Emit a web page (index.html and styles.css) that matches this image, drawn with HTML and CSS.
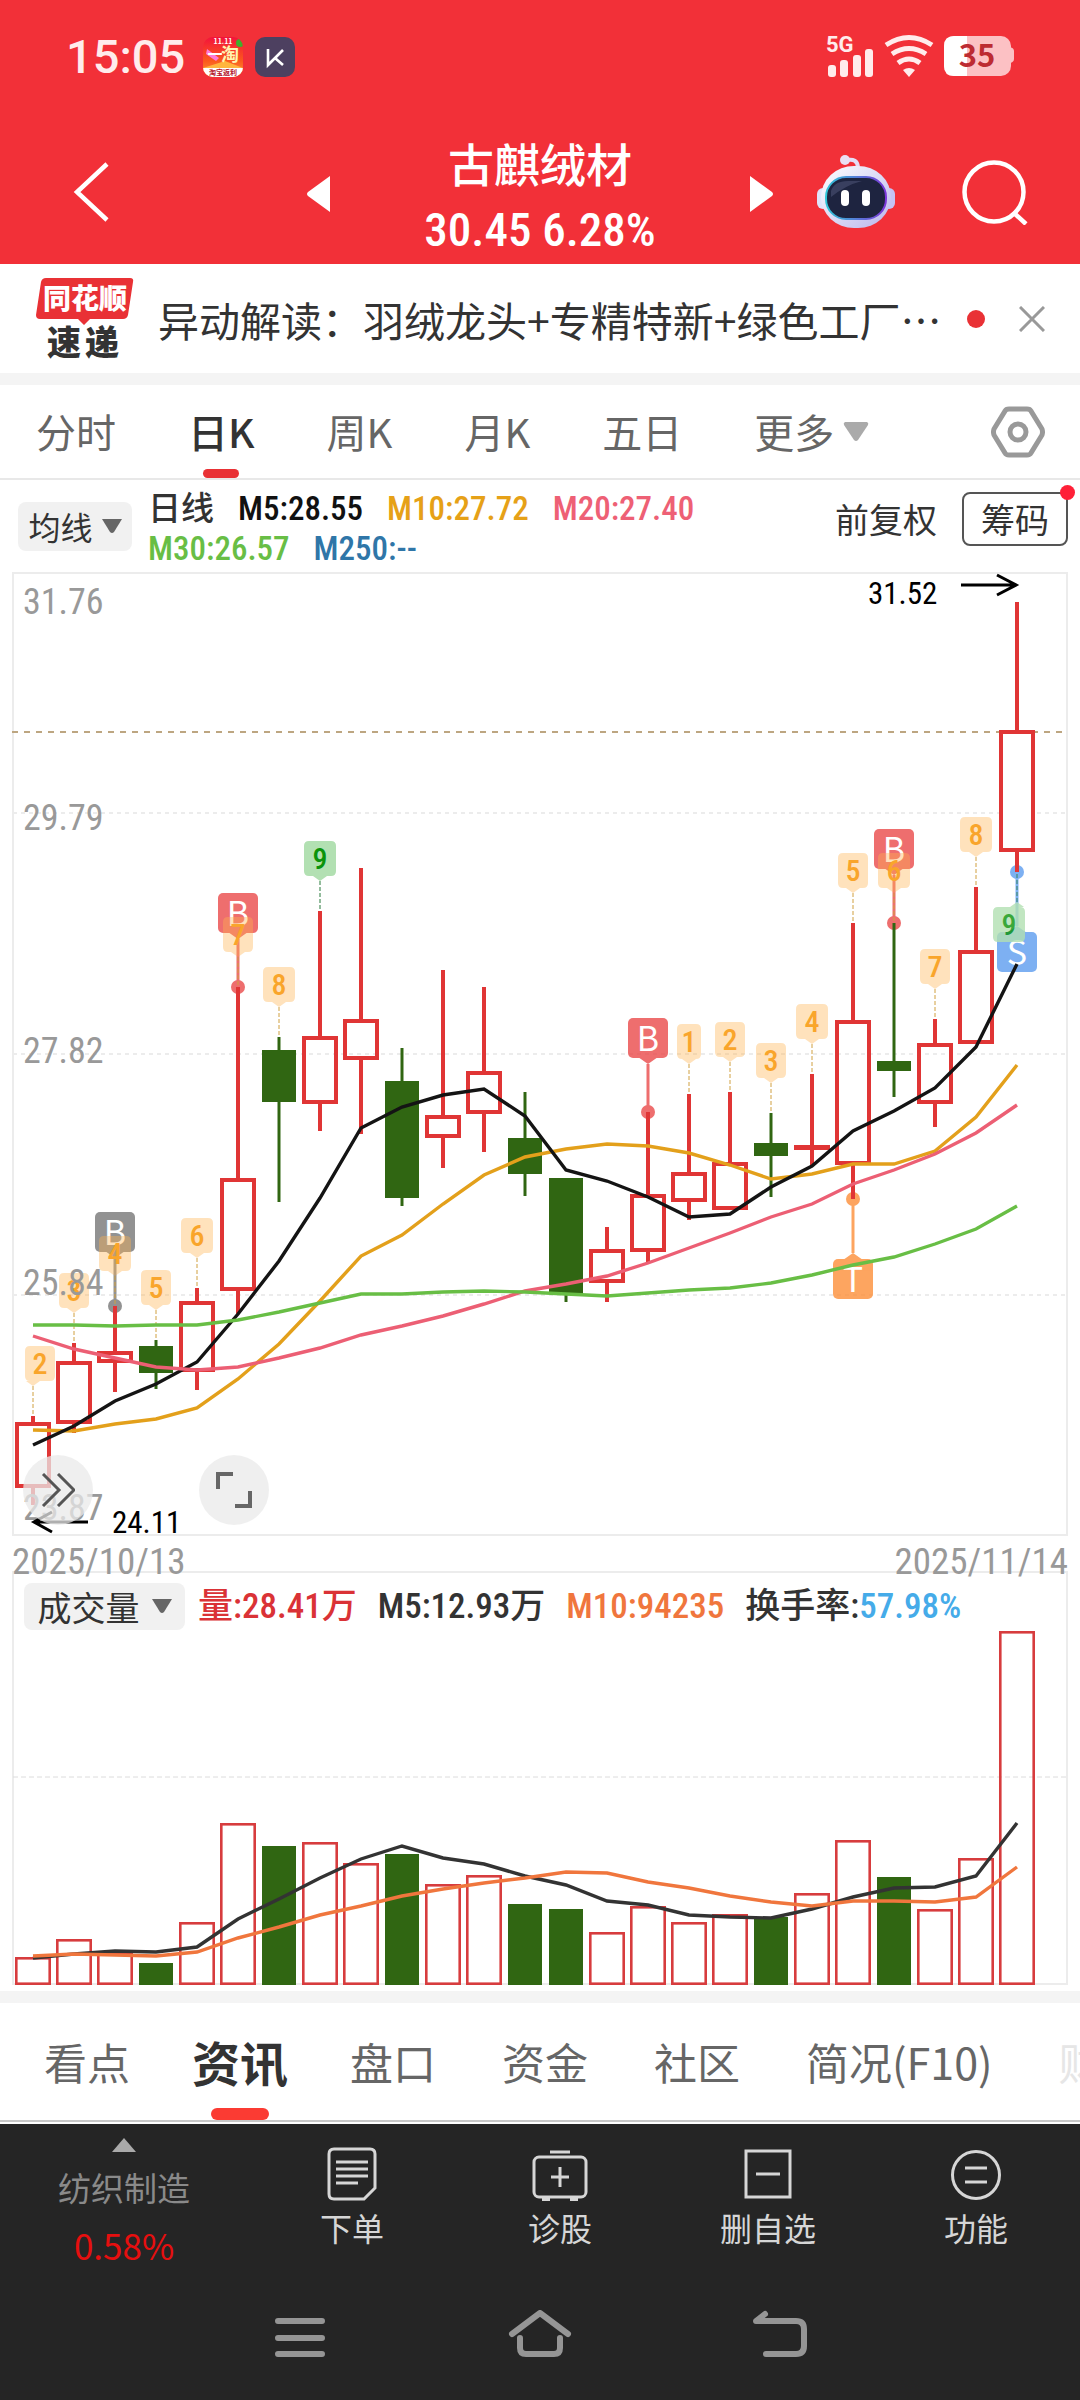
FILE: index.html
```html
<!DOCTYPE html>
<html lang="zh-CN">
<head>
<meta charset="utf-8">
<meta name="viewport" content="width=device-width, initial-scale=1">
<title>古麒绒材 30.45</title>
<link rel="stylesheet" href="styles.css">
</head>
<body>
<header class="top">
  <div class="status">
    <span class="clock">15:05</span>
    <svg class="app-icon" viewBox="0 0 40 40" aria-hidden="true">
      <defs><linearGradient id="app" x1="0" y1="0" x2="0" y2="1"><stop offset="0" stop-color="#f3123c"/><stop offset=".6" stop-color="#fb5a1c"/><stop offset="1" stop-color="#ff9a3a"/></linearGradient><clipPath id="appclip"><rect width="40" height="40" rx="10"/></clipPath></defs>
      <g clip-path="url(#appclip)"><rect width="40" height="40" fill="url(#app)"/><path d="M4 12l12 9-3 3-10-7z" fill="#ff7ad8"/><circle cx="37" cy="6" r="4" fill="#3faf2c"/><path d="M0 31L22 24L40 31V40H0z" fill="#ffb53e"/><rect y="31" width="40" height="9" fill="#fff"/>
      <text x="20" y="7" font-size="7" class="mini" fill="#fff">11.11</text><text x="12" y="23" font-size="15" class="mini" fill="#fff">一</text><text x="27" y="24" font-size="18" class="mini" fill="#fff3b0">淘</text><text x="20" y="38" font-size="7" class="mini" fill="#b3122a">淘宝返利</text></g>
    </svg>
    <svg class="app-icon" viewBox="0 0 40 40" aria-hidden="true"><rect width="40" height="40" rx="10" fill="#4d4060"/><path d="M13 12V28L28 13M20 21L28 28" fill="none" stroke="#fff" stroke-width="2.6"/></svg>
    <svg class="signals" viewBox="0 0 190 44" role="img" aria-label="5G 35%">
      <text x="0" y="17" class="net" fill="#ffecec">5G</text>
      <g fill="#ffecec"><rect x="2" y="30" width="8" height="12" rx="3"/><rect x="14" y="25" width="8" height="17" rx="3"/><rect x="27" y="20" width="8" height="22" rx="3"/><rect x="39" y="14" width="8" height="28" rx="3"/><path d="M83 42L77 35Q83 31 89 35Z"/></g>
      <g fill="none" stroke="#ffecec" stroke-width="5"><path d="M60 10Q83 -5 106 10"/><path d="M66 19Q83 8 100 19"/><path d="M72 28Q83 20 94 28"/></g>
      <path d="M184 12q4 1 4 4v8q0 3-4 4z" fill="#fcc1c4"/><rect x="118" y="1" width="67" height="40" rx="10" fill="#fcc1c4"/><path d="M128 1H141V41H128Q118 41 118 31V11Q118 1 128 1Z" fill="#fff"/>
      <text x="151" y="32" class="battery" fill="#bd2b32">35</text>
    </svg>
  </div>
  <div class="titlebar">
    <button class="icon-btn" aria-label="返回"><svg width="40" height="66" viewBox="0 0 40 66"><path d="M35 5L5 33L35 61" fill="none" stroke="#fff" stroke-width="4.5"/></svg></button>
    <div class="stock">
      <button class="icon-btn" aria-label="上一只"><svg width="24" height="36" viewBox="0 0 24 36"><path d="M24 0V36L2 20Q0 18 2 16Z" fill="#fff"/></svg></button>
      <h1 class="name">古麒绒材<span class="quote">30.45 6.28%</span></h1>
      <button class="icon-btn" aria-label="下一只"><svg width="24" height="36" viewBox="0 0 24 36"><path d="M0 0V36L22 20Q24 18 22 16Z" fill="#fff"/></svg></button>
    </div>
    <button class="icon-btn" aria-label="智能助手"><svg width="80" height="74" viewBox="0 0 80 74">
      <defs><linearGradient id="shell" x1="0" y1="0" x2="1" y2="1"><stop offset="0" stop-color="#fff"/><stop offset="1" stop-color="#b9b6ec"/></linearGradient><linearGradient id="rim" x1="0" x2="1"><stop offset="0" stop-color="#2fc5d8"/><stop offset="1" stop-color="#7b35d8"/></linearGradient></defs>
      <path d="M31 5Q41 3 42 12" fill="none" stroke="#e4ddf6" stroke-width="4"/><circle cx="29" cy="5" r="5" fill="#eadff3"/>
      <rect x="1" y="33" width="12" height="21" rx="6" fill="#dfe3fa"/><rect x="67" y="33" width="12" height="21" rx="6" fill="#c5c2f4"/>
      <rect x="5" y="11" width="70" height="62" rx="33" fill="url(#shell)"/><rect x="10" y="22" width="60" height="42" rx="20" fill="#1e2440" stroke="url(#rim)" stroke-width="2"/><path d="M15 36Q18 26 32 26H46Q30 30 15 42Z" fill="#4b5275" opacity=".6"/>
      <rect x="25" y="35" width="8" height="16" rx="4" fill="#fff"/><rect x="46" y="35" width="8" height="16" rx="4" fill="#fff"/></svg></button>
    <button class="icon-btn search" aria-label="搜索"><svg width="66" height="66" viewBox="0 0 66 66"><g fill="none" stroke="#fff" stroke-width="4.5"><circle cx="32" cy="33" r="29.5"/><path d="M51 53L64 65"/></g></svg></button>
  </div>
</header>

<section class="news">
  <svg class="news-logo" viewBox="0 0 98 82" role="img" aria-label="同花顺速递">
    <path d="M10 0H94Q98 0 97 4L92 37Q91 41 87 41H54L48 47L42 41H4Q0 41 0 37L5 4Q6 0 10 0Z" fill="#e93135"/>
    <text x="49" y="31" class="logo-a" fill="#fff">同花顺</text>
    <text y="77" class="logo-b" fill="#333"><tspan x="28">速</tspan><tspan x="66">递</tspan></text>
  </svg>
  <a class="news-link" href="#news">异动解读：羽绒龙头+专精特新+绿色工厂…</a>
  <span class="unread"></span>
  <button class="icon-btn" aria-label="关闭"><svg width="26" height="26" viewBox="0 0 26 26"><path d="M1 1L25 25M25 1L1 25" stroke="#999" stroke-width="3"/></svg></button>
</section>

<nav class="period">
  <button class="tab">分时</button>
  <button class="tab on">日K</button>
  <button class="tab">周K</button>
  <button class="tab">月K</button>
  <button class="tab">五日</button>
  <button class="tab more">更多<svg width="26" height="20" viewBox="0 0 26 20"><path d="M2 0H24Q26 1 25 3L15 18Q13 20 11 18L1 3Q0 1 2 0Z" fill="#aaa"/></svg></button>
  <button class="icon-btn settings" aria-label="设置"><svg width="54" height="52" viewBox="0 0 54 52"><g fill="none" stroke="#999" stroke-width="5"><path d="M18 3H36Q39 3 40 5L51 23Q52 26 51 29L40 47Q39 49 36 49H18Q15 49 14 47L3 29Q2 26 3 23L14 5Q15 3 18 3Z"/><circle cx="27" cy="26" r="8"/></g></svg></button>
</nav>

<section class="indicators">
  <button class="picker">均线<svg width="20" height="14" viewBox="0 0 20 14"><path d="M0 0H20L12 13Q10 15 8 13Z" fill="#666"/></svg></button>
  <ul class="averages">
    <li>日线</li><li class="m5">M5:28.55</li><li class="m10">M10:27.72</li><li class="m20">M20:27.40</li><li class="m30">M30:26.57</li><li class="m250">M250:--</li>
  </ul>
  <button class="adjust">前复权</button>
  <button class="chips">筹码</button>
</section>

<main>
  <div class="price">
    <svg id="price-chart" viewBox="0 572 1080 964" role="img" aria-label="日K线图"></svg>
    <button class="round forward" aria-label="前进"><svg width="34" height="34" viewBox="0 0 34 34"><path d="M2 1L18 17L2 33M17 1L33 17L17 33" fill="none" stroke="#555" stroke-width="3"/></svg></button>
    <button class="round expand" aria-label="全屏"><svg width="36" height="36" viewBox="0 0 36 36"><path d="M2 17V2H17M34 19V34H19" fill="none" stroke="#666" stroke-width="4"/></svg></button>
  </div>
  <div class="dates"><time>2025/10/13</time><time>2025/11/14</time></div>
  <div class="volume">
    <div class="legend">
      <button class="picker">成交量<svg width="20" height="14" viewBox="0 0 20 14"><path d="M0 0H20L12 13Q10 15 8 13Z" fill="#666"/></svg></button>
      <span class="vol">量:28.41万</span><span>M5:12.93万</span><span class="v10">M10:94235</span><span>换手率:<b class="rate">57.98%</b></span>
    </div>
    <svg id="volume-chart" viewBox="14 1630 1052 353" role="img" aria-label="成交量图"></svg>
  </div>
</main>

<nav class="sections">
  <a href="#view">看点</a><a href="#info" class="on">资讯</a><a href="#book">盘口</a><a href="#fund">资金</a><a href="#bbs">社区</a><a href="#f10">简况(F10)</a><a href="#fin" class="faded">财务</a>
</nav>

<footer class="bottom">
  <div class="actions">
    <a class="sector" href="#sector"><svg width="24" height="14" viewBox="0 0 24 14"><path d="M12 0L24 14H0Z" fill="#aaa"/></svg><span>纺织制造</span><span class="gain">0.58%</span></a>
    <button class="action"><svg width="52" height="54" viewBox="0 0 52 54"><g fill="none" stroke="#d6d6d6" stroke-width="3"><path d="M8 2H44Q49 2 49 7V41L38 52H8Q3 52 3 47V7Q3 2 8 2Z"/><path d="M10 15H42M10 22H42M10 29H42M10 36H32"/></g></svg>下单</button>
    <button class="action"><svg width="56" height="54" viewBox="0 0 56 54"><g fill="none" stroke="#d6d6d6" stroke-width="3"><rect x="2" y="10" width="52" height="40" rx="5"/><path d="M18 5H38M28 20V40M19 30H37"/><path d="M10 52H18M38 52H46" stroke-width="4"/></g></svg>诊股</button>
    <button class="action"><svg width="52" height="54" viewBox="0 0 52 54"><g fill="none" stroke="#d6d6d6" stroke-width="3"><rect x="4" y="4" width="44" height="46"/><path d="M14 27H38"/></g></svg>删自选</button>
    <button class="action"><svg width="52" height="54" viewBox="0 0 52 54"><g fill="none" stroke="#d6d6d6" stroke-width="3"><circle cx="26" cy="28" r="23.5"/><path d="M15 21H37M15 35H37"/></g></svg>功能</button>
  </div>
  <div class="system">
    <button class="icon-btn" aria-label="最近任务"><svg width="64" height="50" viewBox="0 0 64 50"><path d="M10 11H54M10 28H54M10 44H54" fill="none" stroke="#959595" stroke-width="6" stroke-linecap="round"/></svg></button>
    <button class="icon-btn" aria-label="主页"><svg width="64" height="50" viewBox="0 0 64 50"><g fill="none" stroke="#959595" stroke-width="6" stroke-linecap="round" stroke-linejoin="round"><path d="M4 24L32 3L60 24"/><path d="M12 28V38Q12 44 18 44H46Q52 44 52 38V28"/></g></svg></button>
    <button class="icon-btn" aria-label="返回上一页"><svg width="64" height="50" viewBox="0 0 64 50"><g fill="none" stroke="#959595" stroke-width="6" stroke-linecap="round" stroke-linejoin="round"><path d="M18 44H48Q56 44 56 36V19Q56 11 48 11H8L17 4"/></g></svg></button>
  </div>
</footer>
<script src="chart.js"></script>
</body>
</html>
```
FILE: styles.css
```css
* { box-sizing: border-box; }
body {
  margin: 0;
  background: #fff;
  color: #333;
  font-family: "Noto Sans CJK SC", sans-serif;
  --num: "Roboto Condensed", "Liberation Sans Narrow", Roboto, "Noto Sans CJK SC", sans-serif;
}
button { margin: 0; padding: 0; border: 0; background: none; color: inherit; font: inherit; }
a { color: inherit; text-decoration: none; }
svg { display: block; flex: none; }
.icon-btn { display: block; flex: none; }

.top { background: #f23038; color: #fff; }
.status { display: flex; align-items: center; gap: 12px; height: 114px; padding: 0 64px 0 66px; }
.clock { margin-right: 6px; font: 500 47px/50px Roboto, sans-serif; color: #ffecec; }
.app-icon { width: 40px; height: 40px; }
.mini { font-family: "Noto Sans CJK SC", sans-serif; font-weight: 700; text-anchor: middle; }
.signals { width: 190px; height: 44px; margin-left: auto; overflow: visible; }
.net { font: 700 22px Roboto, sans-serif; }
.battery { font: 700 31px "Noto Sans CJK SC", sans-serif; text-anchor: middle; }
.titlebar { display: flex; align-items: center; height: 150px; padding: 6px 52px 0 72px; }
.stock { flex: 1; display: flex; align-items: center; justify-content: space-between; margin: 0 42px 0 194px; }
.stock > .icon-btn { margin-top: 4px; }
.name { margin: 8px 0 0; text-align: center; font-weight: 500; font-size: 46px; line-height: 68px; }
.quote { display: block; font-family: var(--num); font-size: 47px; }
.search { margin-left: 66px; }

.news { display: flex; align-items: center; height: 121px; padding: 0 35px 0 36px; border-bottom: 12px solid #f4f4f4; }
.news-logo { width: 98px; height: 82px; margin-right: 24px; }
.logo-a { font: 900 28px "Noto Sans CJK SC", sans-serif; text-anchor: middle; }
.logo-b { font: 900 34px "Noto Sans CJK SC", sans-serif; text-anchor: middle; }
.news-link { flex: 1; min-width: 0; overflow: hidden; white-space: nowrap; font-size: 41px; line-height: 60px; }
.unread { flex: none; width: 18px; height: 18px; margin: 0 34px 0 20px; border-radius: 50%; background: #e93135; }

.period { display: flex; align-items: center; gap: 72px; height: 95px; padding: 0 35px 0 36px; border-bottom: 2px solid #e8e8e8; }
.tab { position: relative; height: 93px; font-size: 40px; line-height: 93px; color: #666; white-space: nowrap; }
.tab.on { font-weight: 500; color: #333; }
.tab.on::after { content: ""; position: absolute; left: 50%; bottom: 0; width: 36px; height: 9px; margin-left: -18px; border-radius: 5px; background: #e93135; }
.more { display: flex; align-items: center; gap: 9px; }
.settings { margin-left: auto; }

.indicators { display: flex; align-items: center; height: 92px; padding: 0 12px 0 18px; }
.picker { flex: none; display: flex; align-items: center; justify-content: center; gap: 9px; width: 114px; height: 49px; border-radius: 8px; background: #f1f1f1; font-size: 32px; }
.averages { flex: 1; display: flex; flex-wrap: wrap; column-gap: 24px; margin: 6px 20px 0 16px; padding: 0; list-style: none; font: 500 33px/40px var(--num); }
.averages li { white-space: nowrap; }
.m5 { color: #111; } .m10 { color: #e6a117; } .m20 { color: #ee6075; } .m30 { color: #68be45; } .m250 { color: #2f76a8; }
.adjust { margin: 0 25px 14px 0; font-size: 34px; line-height: 54px; }
.chips { position: relative; width: 106px; height: 54px; margin-bottom: 14px; border: 2px solid #555; border-radius: 8px; font-size: 34px; line-height: 48px; }
.chips::after { content: ""; position: absolute; right: -9px; top: -9px; width: 15px; height: 15px; border-radius: 50%; background: #ff2038; }

.price { position: relative; }
#price-chart, #volume-chart { width: 100%; height: auto; overflow: visible; }
.round { position: absolute; bottom: 11px; display: flex; align-items: center; justify-content: center; width: 70px; height: 70px; border-radius: 50%; background: rgba(234, 234, 234, .75); }
.forward { left: 23px; }
.expand { left: 199px; }
.dates { display: flex; justify-content: space-between; height: 35px; padding: 8px 12px 0 12px; font: 37px/36px var(--num); color: #999; }
.volume { margin: 0 12px 6px 12px; border: 2px solid #ececec; }
.legend { display: flex; align-items: center; gap: 21px; padding: 9px 10px 0; font: 500 35px/48px var(--num); white-space: nowrap; }
.legend span { padding-top: 2px; line-height: 46px; }
.legend .picker { width: 161px; height: 47px; margin-right: -8px; gap: 12px; font: 400 34px/47px "Noto Sans CJK SC", sans-serif; }
.legend .picker + span { margin-left: 0; }
.legend { height: 57px; }
.vol { color: #da3236; } .v10 { color: #f0763d; } .rate { font-weight: inherit; color: #45abe9; }

.axis { font: 36px var(--num); fill: #999; }
.extreme { font: 31px var(--num); fill: #000; }
.count { font: 500 30px var(--num); text-anchor: middle; }
.flag { font: 34px "Noto Sans CJK SC", sans-serif; fill: #fff; text-anchor: middle; }

.sections { display: flex; align-items: center; gap: 66px; height: 131px; padding-left: 44px; border-top: 12px solid #f4f4f4; border-bottom: 2px solid #c8c8c8; margin-bottom: 2px; overflow: hidden; font-size: 43px; line-height: 117px; color: #666; white-space: nowrap; }
.sections a { flex: none; position: relative; }
.sections .on { margin: 0 -4px; font-size: 48px; font-weight: 700; color: #333; }
.sections .on::after { content: ""; position: absolute; left: 50%; bottom: 0; width: 58px; height: 12px; margin-left: -29px; border-radius: 6px; background: #fb3b33; }
.sections .faded { color: #e6e6e6; }

.bottom { background: #252525; }
.actions { display: grid; grid-template-columns: 248fr 208fr 208fr 208fr 208fr; height: 164px; }
.sector { display: flex; flex-direction: column; align-items: center; padding-top: 14px; font-size: 33px; line-height: 58px; color: #8a8a8a; }
.sector svg { margin-bottom: 6px; }
.gain { font-size: 35px; color: #e60f0f; }
.action { display: flex; flex-direction: column; align-items: center; padding-top: 23px; font-size: 32px; line-height: 52px; color: #d6d6d6; }
.system { display: flex; align-items: flex-start; justify-content: center; gap: 176px; height: 112px; padding-top: 22px; }
```
FILE: chart.js
```js
// One row per day: rising, high, body top, body bottom, low, volume bar top
const days = [
  [1, 1416, 1422, 1488, 1505, 1957], [1, 1343, 1361, 1424, 1433, 1939], [1, 1306, 1351, 1363, 1392, 1953],
  [0, 1340, 1346, 1373, 1389, 1963], [1, 1288, 1301, 1372, 1390, 1922], [1, 987, 1178, 1291, 1314, 1823],
  [0, 1037, 1050, 1102, 1202, 1846], [1, 911, 1036, 1104, 1131, 1842], [1, 868, 1019, 1060, 1134, 1863],
  [0, 1048, 1081, 1198, 1206, 1854], [1, 970, 1115, 1138, 1168, 1884], [1, 987, 1071, 1114, 1152, 1875],
  [0, 1092, 1138, 1174, 1196, 1904], [0, 1178, 1178, 1294, 1302, 1909], [1, 1227, 1249, 1283, 1302, 1932],
  [1, 1112, 1194, 1252, 1263, 1906], [1, 1094, 1172, 1202, 1220, 1922], [1, 1092, 1162, 1210, 1210, 1914],
  [0, 1113, 1143, 1156, 1197, 1917], [1, 1074, 1145, 1150, 1166, 1893], [1, 923, 1020, 1165, 1199, 1840],
  [0, 923, 1061, 1071, 1097, 1877], [1, 1019, 1043, 1104, 1127, 1909], [1, 887, 950, 1044, 1044, 1858],
  [1, 602, 730, 852, 872, 1631]
];
const averages = {
  '#e3a01b': [1430, 1431, 1424, 1419, 1408, 1379, 1344, 1301, 1256, 1235, 1204, 1175, 1157, 1149, 1144, 1146, 1153, 1165, 1179, 1174, 1164, 1164, 1151, 1117, 1065],
  '#141414': [1445, 1426, 1401, 1384, 1362, 1314, 1261, 1198, 1128, 1107, 1095, 1089, 1116, 1170, 1181, 1197, 1217, 1214, 1187, 1166, 1131, 1111, 1088, 1047, 964],
  '#ec5f74': [1336, 1349, 1358, 1367, 1370, 1367, 1358, 1348, 1335, 1326, 1316, 1304, 1291, 1284, 1276, 1263, 1248, 1233, 1217, 1204, 1184, 1170, 1154, 1133, 1105],
  '#68be45': [1325, 1325, 1326, 1325, 1325, 1320, 1312, 1303, 1294, 1294, 1292, 1291, 1292, 1294, 1296, 1293, 1290, 1288, 1283, 1275, 1265, 1257, 1244, 1229, 1206]
};
const volumeAverages = {
  '#333': [1958, 1954, 1951, 1952, 1947, 1919, 1899, 1878, 1859, 1846, 1858, 1864, 1876, 1885, 1901, 1905, 1915, 1917, 1918, 1909, 1897, 1888, 1887, 1876, 1823],
  '#f0763d': [1956, 1954, 1955, 1956, 1952, 1938, 1927, 1915, 1906, 1896, 1889, 1883, 1878, 1872, 1873, 1882, 1888, 1896, 1902, 1906, 1901, 1901, 1902, 1897, 1867]
};
const RED = '#e03535', GREEN = '#306612';
const x = i => 33 + 41 * i;
const line = (x1, y1, x2, y2, color, w, dash) =>
  `<path d="M${x1} ${y1}L${x2} ${y2}" stroke="${color}" stroke-width="${w}"${dash ? ` stroke-dasharray="${dash}"` : ''}/>`;
const box = (cx, top, w, h, stroke, color) =>
  `<rect x="${cx - w / 2 + stroke / 2}" y="${top + stroke / 2}" width="${w - stroke}" height="${h - stroke}" fill="none" stroke="${color}" stroke-width="${stroke}"/>`;
const curve = (ys, color) =>
  `<polyline points="${ys.map((y, i) => x(i) + ',' + y).join(' ')}" fill="none" stroke="${color}" stroke-width="3.4"/>`;

function candle([up, high, top, bottom, low], i) {
  const c = up ? RED : GREEN, w = up ? 4 : 3;
  const s = line(x(i), high, x(i), top, c, w) + line(x(i), bottom, x(i), low, c, w);
  if (!up) return s + `<rect x="${x(i) - 17}" y="${top}" width="34" height="${bottom - top}" fill="${c}"/>`;
  if (bottom - top < 8) return s + `<rect x="${x(i) - 18}" y="${top}" width="36" height="${bottom - top}" fill="${c}"/>`;
  return s + box(x(i), top, 36, bottom - top, 4, c);
}

// Trade flag: a letter box with a stem to a dot on the candle's end
function flag(i, y, letter, color, below) {
  const top = below ? y + 60 : y - 94, tip = below ? y + 54 : y - 48, base = below ? y + 61 : y - 55;
  return `<g opacity=".8">${line(x(i), tip, x(i), y, color, 3)}<circle cx="${x(i)}" cy="${y}" r="7" fill="${color}"/>` +
    `<path d="M${x(i) - 10} ${base}H${x(i) + 10}L${x(i)} ${tip}Z" fill="${color}"/>` +
    `<rect x="${x(i) - 20}" y="${top}" width="40" height="40" rx="5" fill="${color}"/></g>` +
    `<text class="flag" x="${x(i)}" y="${top + 33}">${letter}</text>`;
}

// Sequence count: a small numbered tag with a dashed stem
function count(i, n, shift = 0, below = false) {
  const green = n === 9, c = green ? '#0a930a' : '#f9a52b';
  const edge = below ? days[i][4] : days[i][1], d = below ? 1 : -1;
  const w = n === 1 ? 24 : [2, 3, 5, 7].includes(n) ? 30 : 32;
  const cx = x(i) + shift, top = below ? edge + 35 : edge - 70, tip = edge + 30 * d;
  return `<g fill="${green ? '#b2e0b2' : 'rgb(255,180,80)'}" fill-opacity="${green ? 1 : .38}"><path d="M${cx - w / 2 + 5} ${top}h${w - 10}q5 0 5 5v25q0 5-5 5h${10 - w}q-5 0-5-5v-25q0-5 5-5z"/>` +
    `<path d="M${x(i) - 7} ${edge + 35 * d}h14L${x(i)} ${tip}z"/></g>` +
    line(x(i), tip, x(i), edge, green ? '#27793a' : '#d0a040', 1, '4 2') +
    `<text class="count" x="${cx}" y="${top + 28}" fill="${c}">${n}</text>`;
}

const labels = [['31.76', 614], ['29.79', 830], ['27.82', 1063], ['25.84', 1295], ['23.87', 1520]];
document.getElementById('price-chart').innerHTML =
  '<rect x="13" y="573" width="1054" height="962" fill="none" stroke="#ececec" stroke-width="2"/>' +
  [813, 1054, 1295].map(y => line(13, y, 1067, y, '#ececec', 2, '4 4')).join('') +
  line(12, 732, 1067, 732, '#bda681', 2, '6 6') +
  flag(2, 1306, 'B', '#777', false) + flag(5, 987, 'B', '#ea4a4a', false) + flag(15, 1112, 'B', '#ea4a4a', false) +
  flag(21, 923, 'B', '#ea4a4a', false) + flag(24, 872, 'S', '#5d9df0', true) + flag(20, 1199, 'T', '#fd8e38', true) +
  '<rect x="1001" y="732" width="32" height="118" fill="#fff"/>' +
  days.map(candle).join('') +
  count(0, 2, 7) + [3, 4, 5, 6, 7, 8, 9].map((n, k) => count(k + 1, n)).join('') +
  [1, 2, 3, 4, 5, 6, 7, 8].map((n, k) => count(k + 16, n)).join('') +
  `<g opacity=".8">${count(24, 9, -8, true)}</g>` +
  Object.entries(averages).map(([c, ys]) => curve(ys, c)).join('') +
  labels.map(([t, y]) => `<text class="axis" x="23" y="${y}">${t}</text>`).join('') +
  '<g fill="none" stroke="#000" stroke-width="3"><path d="M961 585H1016M997 575L1016 585L997 595"/><path d="M88 1522H34M52 1512L34 1522L52 1532"/></g>' +
  '<text class="extreme" x="868" y="604">31.52</text><text class="extreme" x="112" y="1533">24.11</text>';

document.getElementById('volume-chart').innerHTML =
  line(13, 1777, 1067, 1777, '#dcdcdc', 1, '5 3') +
  days.map((d, i) => d[0] ? box(x(i), d[5], 36, 1985 - d[5], 2.6, '#d73c3e')
    : `<rect x="${x(i) - 17}" y="${d[5]}" width="34" height="${1985 - d[5]}" fill="${GREEN}"/>`).join('') +
  Object.entries(volumeAverages).map(([c, ys]) => curve(ys, c)).join('');
```
